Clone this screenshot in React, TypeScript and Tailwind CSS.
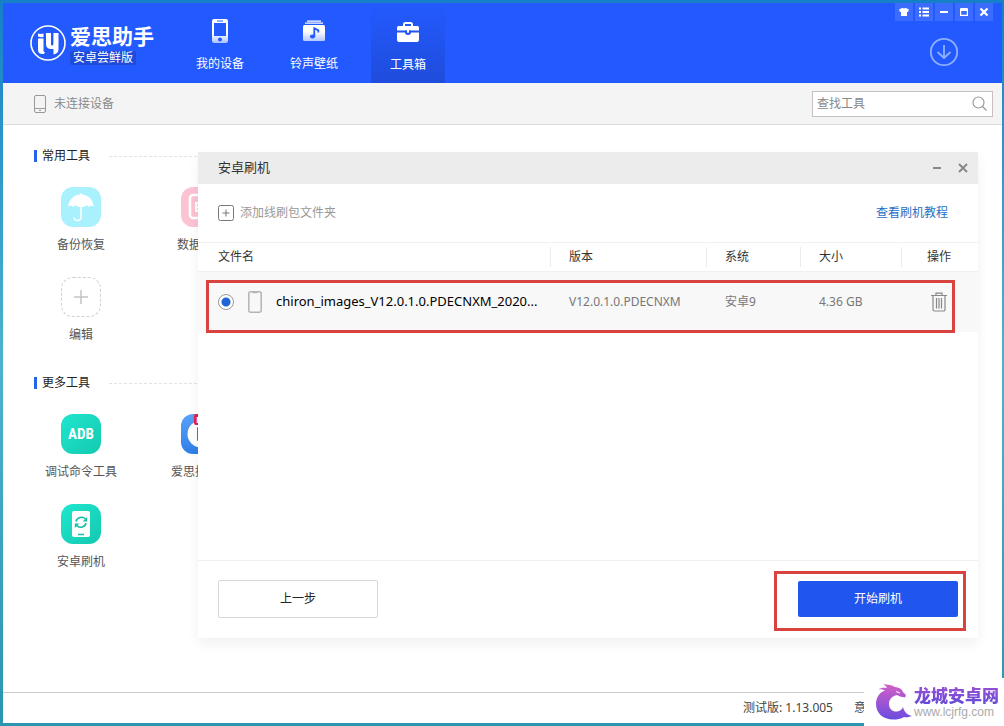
import type { ReactNode } from "react"

const PhoneIcon = () => (
  <svg width="18" height="26" viewBox="0 0 18 26">
    <defs>
      <linearGradient id="phone" x1="0" y1="0" x2="0" y2="1">
        <stop offset="0.6" stopColor="#fff" />
        <stop offset="1" stopColor="#a9c0ff" />
      </linearGradient>
    </defs>
    <path
      fill="url(#phone)"
      fillRule="evenodd"
      d="M3 1h12a2 2 0 0 1 2 2v20a2 2 0 0 1-2 2H3a2 2 0 0 1-2-2V3a2 2 0 0 1 2-2zM3 5v13h12V5zM6 2.5v1h6v-1zM9 19.5a2 2 0 1 0 0 4 2 2 0 0 0 0-4z"
    />
  </svg>
)

const MusicIcon = () => (
  <svg width="24" height="22" viewBox="0 0 24 22">
    <defs>
      <linearGradient id="music" x1="0" y1="0" x2="0" y2="1">
        <stop offset="0.4" stopColor="#fff" />
        <stop offset="1" stopColor="#b4c8ff" />
      </linearGradient>
    </defs>
    <path fill="#fff" d="M5 .5h14v1.2H5zM3 2.6h18v1.2H3z" />
    <rect x="1" y="5" width="22" height="16" rx="1.5" fill="url(#music)" />
    <ellipse cx="10.5" cy="16.5" rx="2.6" ry="2" fill="#235aff" />
    <path d="M12.3 16.5V8.2l4 2.2v2" fill="none" stroke="#235aff" strokeWidth="1.8" />
  </svg>
)

const ToolboxIcon = () => (
  <svg width="24" height="22" viewBox="0 0 24 22">
    <path d="M8 5V3.5A1.5 1.5 0 0 1 9.5 2h5A1.5 1.5 0 0 1 16 3.5V5" fill="none" stroke="#fff" strokeWidth="2" />
    <path fill="#fff" d="M2.5 5h19A1.5 1.5 0 0 1 23 6.5v3H1v-3A1.5 1.5 0 0 1 2.5 5zM1 11.5h22V19a2 2 0 0 1-2 2H3a2 2 0 0 1-2-2z" />
    <path fill="#1f52ea" d="M9 9.5h6V11a3 3 0 0 1-6 0z" />
    <path fill="#fff" d="M11 9h2v2a1 1 0 0 1-2 0z" />
  </svg>
)

const Logo = () => (
  <svg width="36" height="36" viewBox="0 0 36 36" fill="#fff">
    <circle cx="18" cy="18" r="17" fill="none" stroke="#fff" strokeWidth="1.6" />
    <path d="M8 8.5c2 .5 3.500.5 5.500 0v3.500c-2 .4-3.500.3-5.500-.5z" />
    <path d="M8 13.5h5.500v12c0 1 .5 1.500 1.500 1.500l-1 2c-4 .5-6-1-6-4z" />
    <path d="M16 8h5v11c0 1 .5 1.500 1.200 1.500s1.200-.5 1.200-1.200V8H28.500v16c0 3-1.500 5-5 5.500v-5.500c-4.500.5-7.500-1-7.500-5z" />
  </svg>
)

const tabs = [
  { name: "我的设备", icon: <PhoneIcon />, active: false },
  { name: "铃声壁纸", icon: <MusicIcon />, active: false },
  { name: "工具箱", icon: <ToolboxIcon />, active: true },
]

const windowButtons = [
  { name: "皮肤", icon: <path fill="#fff" d="M4 2h1q1 1 2 0h1l3 1.500-1 2.500H9v4H3V6H2L1 3.500z" /> },
  { name: "菜单", icon: <path stroke="#fff" strokeWidth="2" d="M1 2.500h2M4.500 2.500H11M1 6h2M4.500 6H11M1 9.500h2M4.500 9.500H11" /> },
  { name: "最小化", icon: <path stroke="#fff" strokeWidth="2" d="M2 6h8" /> },
  { name: "最大化", icon: <path fill="#fff" fillRule="evenodd" d="M3 2h6a1 1 0 0 1 1 1v7H2V3a1 1 0 0 1 1-1zM3.200 5v3.800h5.600V5z" /> },
  { name: "关闭", icon: <path stroke="#fff" strokeWidth="2.200" d="m2.500 2.500 7 7M9.500 2.500l-7 7" /> },
]

const Header = () => (
  <header className="flex h-20 shrink-0 bg-[#235aff] text-white">
    <div className="flex w-[180px] items-center gap-1 pl-[27px]">
      <Logo />
      <div className="flex flex-col items-start gap-1 pt-1">
        <span className="text-[21px] leading-[22px] font-bold">爱思助手</span>
        <span className="rounded-xs bg-[#1f4bd8] px-[3px] text-xs leading-[14px]">安卓尝鲜版</span>
      </div>
    </div>
    <nav className="flex gap-5">
      {tabs.map((tab) => (
        <a
          key={tab.name}
          href="#"
          className={
            tab.active
              ? "flex w-[74px] flex-col items-center bg-linear-to-b from-[#235aff] to-[#1f4cdb] pt-[13px]"
              : "flex w-[74px] flex-col items-center pt-3"
          }
        >
          <span className="flex h-8 items-center">{tab.icon}</span>
          <span className="mt-2 text-xs leading-[18px]">{tab.name}</span>
        </a>
      ))}
    </nav>
    <div className="ml-auto flex flex-col items-end pr-[9px]">
      <div className="flex gap-0.5">
        {windowButtons.map((button) => (
          <button key={button.name} aria-label={button.name} className="flex size-[18px] items-center justify-center bg-[#3b6cff]">
            <svg width="12" height="12" viewBox="0 0 12 12">{button.icon}</svg>
          </button>
        ))}
      </div>
      <button aria-label="下载" className="mt-4 mr-[34px]">
        <svg width="30" height="30" viewBox="0 0 30 30" fill="none" stroke="#8fb0ff" strokeWidth="1.8">
          <circle cx="15" cy="15" r="13.2" />
          <path d="M15 8v13M8.500 15l6.500 6 6.500-6" />
        </svg>
      </button>
    </div>
  </header>
)

const StatusBar = () => (
  <div className="flex h-[42px] shrink-0 items-center border-b border-[#dcdcdc] bg-[#f4f4f4] pr-[9px] pl-[31px]">
    <svg width="12" height="18" viewBox="0 0 12 18" fill="none" stroke="#999">
      <rect x=".5" y=".5" width="11" height="17" rx="1.5" />
      <path d="M.5 13.500h11M5 15.500h2" />
    </svg>
    <span className="ml-2 text-xs text-[#8a8a8a]">未连接设备</span>
    <div className="ml-auto flex h-[26px] w-[181px] items-center border border-[#c8c0c0] bg-white px-1">
      <input
        aria-label="查找工具"
        placeholder="查找工具"
        className="min-w-0 flex-1 text-xs outline-none placeholder:text-[#888]"
      />
      <svg width="17" height="17" viewBox="0 0 17 17" fill="none" stroke="#999" strokeWidth="1.2">
        <circle cx="7.5" cy="7.5" r="5.5" />
        <path d="m11.500 11.500 4 4" />
      </svg>
    </div>
  </div>
)

const UmbrellaIcon = () => (
  <svg width="40" height="40" viewBox="0 0 40 40">
    <path fill="#fff" d="M7 20C8 12 13 8 19 7.500V6.500h2v1C27 8 32 12 33 20c-1.500-2-3.500-2-5 0-1.500-2-3.500-2-5 0h-6c-1.500-2-3.500-2-5 0-1.500-2-3.500-2-5 0z" />
    <path d="M20 19v11c0 4.500-7 4.500-7 .5" fill="none" stroke="#fff" strokeWidth="1.5" />
  </svg>
)

const DataIcon = () => (
  <svg width="40" height="40" viewBox="0 0 40 40" fill="none" stroke="#fff" strokeWidth="2.5">
    <rect x="9" y="8" width="20" height="23" rx="3" />
    <path d="M22 16h-7v8h7M15 20h6" strokeWidth="2" />
  </svg>
)

const PlayerIcon = () => (
  <svg width="40" height="40" viewBox="0 0 40 40">
    <circle cx="20" cy="20" r="13.5" fill="#fff" />
    <path fill="#2f7de8" d="M16 13l12 7-12 7z" />
  </svg>
)

const FlashIcon = () => (
  <svg width="40" height="40" viewBox="0 0 40 40">
    <rect x="11" y="7" width="18" height="26" rx="2" fill="#fff" />
    <path d="M15 17.500a5.500 5 0 0 1 9.500-2.500M25 19a5.500 5 0 0 1-9.500 2.500M17 30.500h6" fill="none" stroke="#12bfa8" strokeWidth="1.6" />
    <path fill="#12bfa8" d="M26.200 13v4.500h-4.500zM13.800 24v-4.500h4.500z" />
  </svg>
)

type Tool = { name: string; tile: string; icon: ReactNode; badge?: string }

const commonTools: Tool[] = [
  { name: "备份恢复", tile: "rounded-xl bg-[#a9f1fc]", icon: <UmbrellaIcon /> },
  { name: "数据迁移", tile: "rounded-xl bg-[#fcc3d3]", icon: <DataIcon /> },
  {
    name: "编辑",
    tile: "rounded-xl border border-dashed border-[#d0d0d0]",
    icon: (
      <svg width="14" height="14" viewBox="0 0 14 14" stroke="#c4c4c4" strokeWidth="1.5">
        <path d="M7 0v14M0 7h14" />
      </svg>
    ),
  },
]

const moreTools: Tool[] = [
  {
    name: "调试命令工具",
    tile: "rounded-xl bg-linear-to-br from-[#1fe6cf] to-[#14c9b0]",
    icon: <span className="font-['Liberation_Sans_Narrow','Roboto_Condensed','Open_Sans',sans-serif] text-[15px] font-bold text-white">ADB</span>,
  },
  {
    name: "爱思播放器",
    tile: "rounded-xl bg-linear-to-b from-[#5aa2f8] to-[#2f7de8]",
    icon: <PlayerIcon />,
    badge: "NEW",
  },
  { name: "安卓刷机", tile: "rounded-xl bg-linear-to-br from-[#1fe6cf] to-[#14c9b0]", icon: <FlashIcon /> },
]

const ToolSection = ({ title, tools }: { title: string; tools: Tool[] }) => (
  <section>
    <div className="flex h-5 items-center pr-6 pl-[31px]">
      <span className="h-3 w-[3px] bg-[#2563eb]" />
      <h2 className="ml-[5px] text-xs text-[#222]">{title}</h2>
      <span className="ml-[19px] flex-1 border-t border-dashed border-[#e2e2e2]" />
    </div>
    <div className="mt-[21px] grid grid-cols-[120px_120px] gap-y-[22px] pl-[18px]">
      {tools.map((tool) => (
        <a key={tool.name} href="#" className="flex flex-col items-center">
          <span className={`relative flex size-10 items-center justify-center ${tool.tile}`}>
            {tool.icon}
            {tool.badge && (
              <span className="absolute top-0 left-[13px] rounded-xs bg-[#e8203c] px-0.5 text-[9px] leading-[11px] font-bold text-white">
                {tool.badge}
              </span>
            )}
          </span>
          <span className="mt-2 text-xs leading-5 text-[#555]">{tool.name}</span>
        </a>
      ))}
    </div>
  </section>
)

const columns = [
  { name: "版本", width: "w-[156px]" },
  { name: "系统", width: "w-[94px]" },
  { name: "大小", width: "w-[101px]" },
]

const FlashDialog = () => (
  <div
    role="dialog"
    aria-label="安卓刷机"
    className="absolute top-[27px] right-6 bottom-[54px] left-[195px] flex flex-col bg-white shadow-[0_6px_12px_rgba(0,0,0,0.06)]"
  >
    <div className="flex h-8 shrink-0 items-center bg-[#ececec] pr-2.5 pl-5">
      <span className="text-[13px] text-[#333]">安卓刷机</span>
      <button aria-label="最小化" className="mr-4 ml-auto">
        <svg width="10" height="10" viewBox="0 0 10 10" stroke="#888" strokeWidth="2">
          <path d="M1 5h8" />
        </svg>
      </button>
      <button aria-label="关闭">
        <svg width="10" height="10" viewBox="0 0 10 10" stroke="#888" strokeWidth="2">
          <path d="m1 1 8 8M9 1 1 9" />
        </svg>
      </button>
    </div>

    <div className="flex h-[58px] shrink-0 items-center pr-[30px] pl-5 text-xs">
      <button className="flex items-center gap-1.5 text-[#999]">
        <svg width="16" height="16" viewBox="0 0 16 16" fill="none" stroke="#777">
          <rect x=".5" y=".5" width="15" height="15" rx="2" />
          <path d="M8 4.500v7M4.500 8h7" />
        </svg>
        添加线刷包文件夹
      </button>
      <a href="#" className="ml-auto text-[#1f6fc4]">查看刷机教程</a>
    </div>

    <div className="relative">
      <table className="w-full table-fixed text-left text-xs">
        <thead>
          <tr className="h-[29px] border-y border-[#f0f0f0] text-[#333]">
            <th className="pl-5 font-normal">文件名</th>
            {columns.map((column) => (
              <th key={column.name} className={`font-normal ${column.width}`}>
                <span className="flex h-5 items-center border-l border-[#ececec] pl-[18px]">{column.name}</span>
              </th>
            ))}
            <th className="w-[77px] font-normal">
              <span className="flex h-5 items-center border-l border-[#ececec] pl-[25px]">操作</span>
            </th>
          </tr>
        </thead>
        <tbody>
          <tr className="h-[60px] bg-[#f8f8f8] text-[#777]">
            <td className="pl-5">
              <label className="flex items-center text-[13px] text-black">
                <input
                  type="radio"
                  name="rom"
                  defaultChecked
                  className="size-4 shrink-0 appearance-none rounded-full border border-[#999] bg-white bg-[radial-gradient(circle,#1f66d6_4px,transparent_5px)]"
                />
                <svg className="mr-3.5 ml-3.5 shrink-0" width="14" height="22" viewBox="0 0 14 22" fill="none" stroke="#b4b4b4" strokeWidth="1.5">
                  <rect x=".8" y=".8" width="12.4" height="20.4" rx="2" />
                  <path d="M4.500 1.500h5" />
                </svg>
                <span className="whitespace-nowrap">chiron_images_V12.0.1.0.PDECNXM_2020...</span>
              </label>
            </td>
            <td className="pl-[19px]">V12.0.1.0.PDECNXM</td>
            <td className="pl-[19px]">安卓9</td>
            <td className="pl-[19px]">4.36 GB</td>
            <td className="pl-[30px]">
              <button aria-label="删除" className="block">
                <svg width="16" height="20" viewBox="0 0 16 20" fill="none" stroke="#888" strokeWidth="1.2">
                  <path d="M0 3.500h16M5 3V1.200h6V3M2 4v13.500A1.500 1.500 0 0 0 3.500 19h9a1.500 1.500 0 0 0 1.500-1.500V4M5.500 6v10.500M8 6v10.500M10.500 6v10.500" />
                </svg>
              </button>
            </td>
          </tr>
        </tbody>
      </table>
      <div className="pointer-events-none absolute -bottom-px left-2 right-[23px] h-[53px] border-3 border-[#d84340]" />
    </div>

    <div className="mt-auto flex h-[78px] shrink-0 items-center justify-between border-t border-[#f0f0f0] px-5 pb-0.5 text-xs">
      <button className="h-[38px] w-40 rounded-xs border border-[#d4d8d8] bg-white text-[#222]">上一步</button>
      <div className="relative">
        <button className="block h-9 w-40 rounded-xs bg-[#2156ee] text-white">开始刷机</button>
        <div className="pointer-events-none absolute -top-2.5 -right-2 -bottom-3.5 -left-6 border-3 border-[#d84340]" />
      </div>
    </div>
  </div>
)

const Watermark = () => (
  <div className="absolute right-0 bottom-0 flex h-12 w-[140px] items-center bg-white pl-3">
    <svg className="shrink-0" width="38" height="38" viewBox="0 0 38 38">
      <defs>
        <linearGradient id="dragon" x1="0" y1="0" x2="0" y2="1">
          <stop offset="0" stopColor="#d45fc6" />
          <stop offset="1" stopColor="#6a4de0" />
        </linearGradient>
      </defs>
      <path
        fill="url(#dragon)"
        d="M7 1c5 .5 9 1 12 3 4 .5 7 2 8 5l3 3-1 2.500-5-1-3-1.500c-5 1-8 4.500-8 9 0 5 4 8 8 7.500 3-.3 5-2 6-4.500 1 4.500 4 8 9 9-4 1.500-6 1.500-8 1-3 2-7 2.500-11 2.500C7 36.500 0 30 0 21 0 14 4 9 9 7.500 7 6.500 4 6 2 6.500c3-2 6-2 9-1.500-1-2-2-3-4-4z"
      />
      <path d="M20 8.500l4 1.500" stroke="#fff" />
    </svg>
    <div className="whitespace-nowrap">
      <div className="bg-linear-to-b from-[#9a4fd6] to-[#5d48d8] bg-clip-text text-[17px] leading-5 font-black text-transparent">龙城安卓网</div>
      <div className="font-['Liberation_Sans',sans-serif] text-xs leading-3 text-[#aaa]">www.lcjrfg.com</div>
    </div>
  </div>
)

export default function App() {
  return (
    <div className="relative flex min-h-screen flex-col bg-linear-to-b from-[#1580c8] via-[#4bb4cc] to-[#2a95ae] pt-[3px] pr-0.5 pb-[3px] pl-[3px] font-['Noto_Sans','Noto_Sans_CJK_SC',sans-serif]">
      <div className="flex flex-1 flex-col bg-white">
        <Header />
        <StatusBar />
        <main className="relative flex-1 pt-[21px] pb-14">
          <div className="flex flex-col gap-7">
            <ToolSection title="常用工具" tools={commonTools} />
            <ToolSection title="更多工具" tools={moreTools} />
          </div>
          <FlashDialog />
        </main>
        <footer className="flex h-[31px] shrink-0 items-center justify-end gap-[21px] border-t border-[#ccc] pr-[136px] text-xs text-[#444]">
          <span>测试版: 1.13.005</span>
          <a href="#">意</a>
        </footer>
      </div>
      <Watermark />
    </div>
  )
}
